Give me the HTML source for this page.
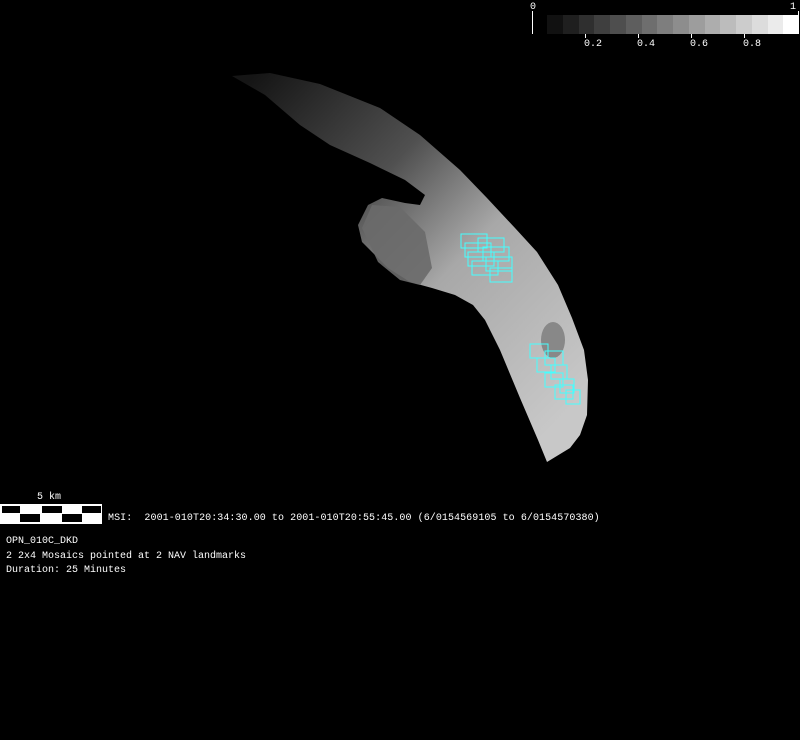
<!DOCTYPE html>
<html><head><style>
body{margin:0;background:#000;width:800px;height:740px;overflow:hidden;position:relative;font-family:"Liberation Mono","DejaVu Sans Mono",monospace;color:#fff}
.t{position:absolute;font-size:10px;line-height:15px;white-space:pre}
</style></head><body>
<svg width="800" height="740" style="position:absolute;left:0;top:0">
<defs>
<linearGradient id="g" x1="250" y1="80" x2="580" y2="400" gradientUnits="userSpaceOnUse">
<stop offset="0" stop-color="#151515"/><stop offset="0.35" stop-color="#505050"/><stop offset="0.6" stop-color="#a8a8a8"/><stop offset="1" stop-color="#c8c8c8"/></linearGradient>
</defs>
<path d="M232,76 L270,73 L320,84 L380,108 L420,135 L460,170 L487,198 L515,228 L537,252 L558,285 L572,318 L584,350 L588,380 L587,415 L580,435 L570,448 L547,462 L538,440 L520,398 L500,350 L485,320 L473,305 L455,295 L432,288 L410,282 L388,268 L362,242 L358,225 L368,205 L382,198 L405,203 L420,205 L425,195 L405,180 L370,163 L330,145 L300,125 L265,95 Z" fill="url(#g)"/>
<path d="M362,228 L372,205 L400,207 L425,232 L432,268 L420,285 L400,280 L378,262 Z" fill="#6a6a6a" opacity="0.9"/>
<ellipse cx="553" cy="340" rx="12" ry="18" fill="#888"/>
<g fill="none" stroke="#4ff" stroke-width="1">
<rect x="461" y="234" width="26" height="14"/><rect x="478" y="238" width="26" height="14"/>
<rect x="465" y="243" width="26" height="14"/><rect x="483" y="247" width="26" height="14"/>
<rect x="468" y="252" width="26" height="14"/><rect x="486" y="257" width="26" height="14"/>
<rect x="472" y="261" width="26" height="14"/><rect x="490" y="268" width="22" height="14"/>
<rect x="530" y="344" width="18" height="14"/><rect x="545" y="351" width="18" height="14"/>
<rect x="537" y="358" width="18" height="14"/><rect x="551" y="365" width="16" height="14"/>
<rect x="545" y="373" width="18" height="14"/><rect x="560" y="379" width="14" height="14"/>
<rect x="555" y="385" width="18" height="14"/><rect x="566" y="390" width="14" height="14"/>
</g>
<rect x="532" y="11" width="1" height="23" fill="#fff"/>
<rect x="798" y="11" width="1" height="23" fill="#fff"/>
<g fill="#fff"><rect x="585" y="34" width="1" height="4"/><rect x="638" y="34" width="1" height="4"/><rect x="691" y="34" width="1" height="4"/><rect x="744" y="34" width="1" height="4"/></g>
<rect x="0.5" y="504.5" width="101" height="19" fill="#fff" stroke="#fff"/>
<g fill="#000"><rect x="2" y="506" width="18" height="7"/><rect x="42" y="506" width="20" height="7"/><rect x="82" y="506" width="19" height="7"/>
<rect x="20" y="514" width="20" height="8"/><rect x="62" y="514" width="20" height="8"/></g>
</svg>
<div style="position:absolute;left:547px;top:15px;width:252px;height:19px;display:flex">
<div style="flex:1;background:#111"></div><div style="flex:1;background:#1f1f1f"></div><div style="flex:1;background:#2f2f2f"></div><div style="flex:1;background:#3f3f3f"></div><div style="flex:1;background:#4e4e4e"></div><div style="flex:1;background:#5e5e5e"></div><div style="flex:1;background:#6e6e6e"></div><div style="flex:1;background:#7e7e7e"></div><div style="flex:1;background:#8d8d8d"></div><div style="flex:1;background:#9d9d9d"></div><div style="flex:1;background:#adadad"></div><div style="flex:1;background:#bcbcbc"></div><div style="flex:1;background:#cccccc"></div><div style="flex:1;background:#dcdcdc"></div><div style="flex:1;background:#ebebeb"></div><div style="flex:1;background:#fff"></div>
</div>
<div class="t" style="left:530px;top:0">0</div>
<div class="t" style="left:790px;top:0">1</div>
<div class="t" style="left:584px;top:37px">0.2</div>
<div class="t" style="left:637px;top:37px">0.4</div>
<div class="t" style="left:690px;top:37px">0.6</div>
<div class="t" style="left:743px;top:37px">0.8</div>
<div class="t" style="left:37px;top:490px">5 km</div>
<div class="t" style="left:108px;top:511px;letter-spacing:0.07px">MSI:  2001-010T20:34:30.00 to 2001-010T20:55:45.00 (6/0154569105 to 6/0154570380)</div>
<div class="t" style="left:6px;top:535px;line-height:14.5px">OPN_010C_DKD
2 2x4 Mosaics pointed at 2 NAV landmarks
Duration: 25 Minutes</div>
</body></html>
